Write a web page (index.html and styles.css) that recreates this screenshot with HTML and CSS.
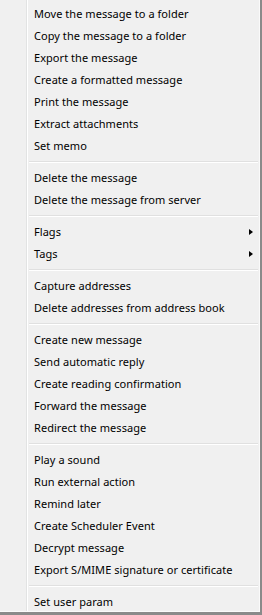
FILE: index.html
```html
<!DOCTYPE html>
<html>
<head>
<meta charset="utf-8">
<link rel="stylesheet" href="styles.css">
</head>
<body>
<div class="menu">
  <div class="item">Move the message to a folder</div>
  <div class="item">Copy the message to a folder</div>
  <div class="item">Export the message</div>
  <div class="item">Create a formatted message</div>
  <div class="item">Print the message</div>
  <div class="item">Extract attachments</div>
  <div class="item">Set memo</div>
  <div class="sep"></div>
  <div class="item">Delete the message</div>
  <div class="item">Delete the message from server</div>
  <div class="sep"></div>
  <div class="item sub">Flags<span class="arrow"></span></div>
  <div class="item sub">Tags<span class="arrow"></span></div>
  <div class="sep"></div>
  <div class="item">Capture addresses</div>
  <div class="item">Delete addresses from address book</div>
  <div class="sep"></div>
  <div class="item">Create new message</div>
  <div class="item">Send automatic reply</div>
  <div class="item">Create reading confirmation</div>
  <div class="item">Forward the message</div>
  <div class="item">Redirect the message</div>
  <div class="sep"></div>
  <div class="item">Play a sound</div>
  <div class="item">Run external action</div>
  <div class="item">Remind later</div>
  <div class="item">Create Scheduler Event</div>
  <div class="item">Decrypt message</div>
  <div class="item">Export S/MIME signature or certificate</div>
  <div class="sep"></div>
  <div class="item">Set user param</div>
</div>
</body>
</html>
```

FILE: styles.css
```css
html, body {
  margin: 0;
  padding: 0;
  background: #f0f0f0;
}
.menu {
  box-sizing: border-box;
  width: 262px;
  height: 615px;
  padding-top: 2px;
  display: flex;
  flex-direction: column;
  background-color: #f0f0f0;
  background-image: linear-gradient(to right, transparent 26px, #e2e3e3 26px, #e2e3e3 27px, #ffffff 27px, #ffffff 28px, transparent 28px);
  border-right: 2px solid #8a8a8a;
  border-bottom: 3px solid #8a8a8a;
  box-shadow: inset -1px -1px 0 #fafafa;
  font-family: "Noto Sans", "Open Sans", sans-serif;
  font-size: 11px;
  letter-spacing: 0.05px;
  color: #000;
}
.item {
  height: 22px;
  line-height: 22px;
  padding-left: 34px;
  padding-top: 1px;
  box-sizing: border-box;
  display: flex;
  align-items: center;
  white-space: nowrap;
}
.sub {
  justify-content: space-between;
  padding-right: 7px;
}
.arrow {
  width: 0;
  height: 0;
  border-top: 3.5px solid transparent;
  border-bottom: 3.5px solid transparent;
  border-left: 4px solid #000;
}
.sep {
  height: 10px;
  margin-left: 29px;
  margin-right: 2px;
  background-image: linear-gradient(to bottom, transparent 5px, #e0e0e0 5px, #e0e0e0 6px, #ffffff 6px, #ffffff 7px, transparent 7px);
}
```
